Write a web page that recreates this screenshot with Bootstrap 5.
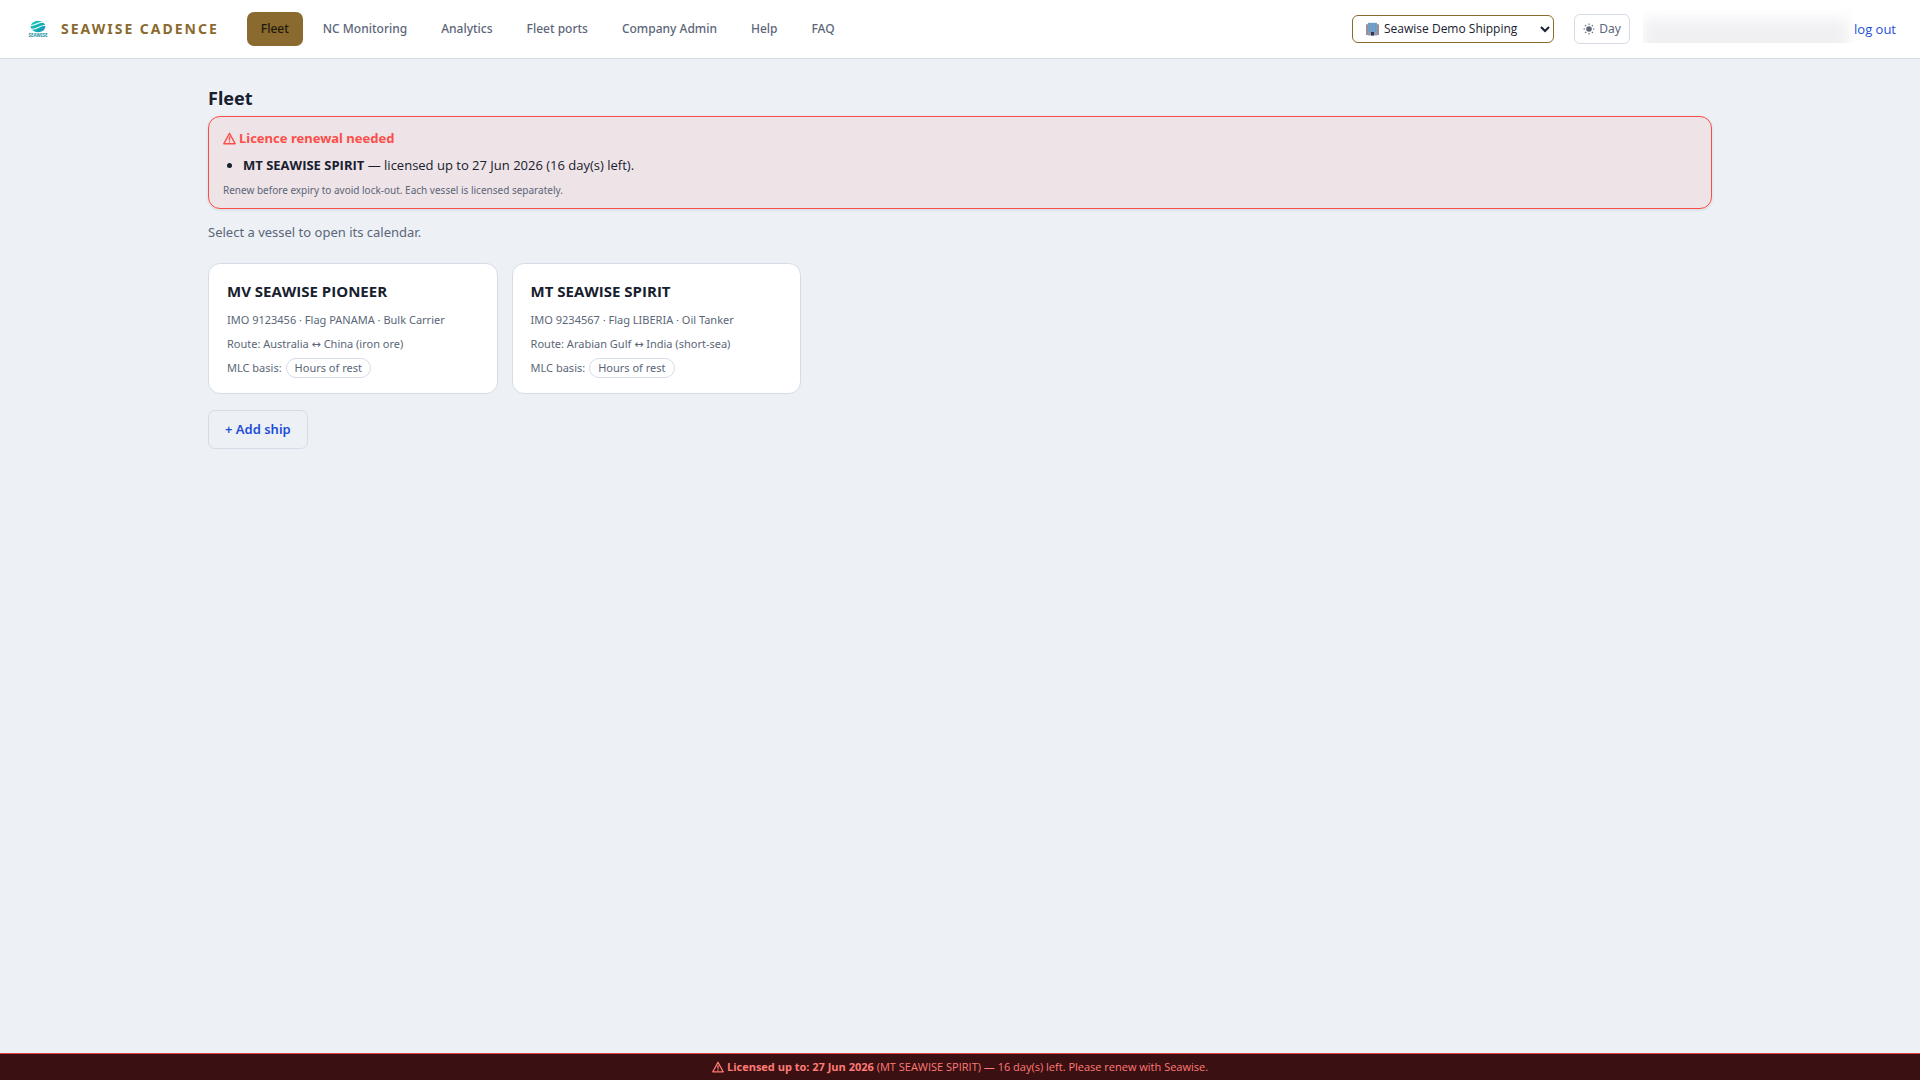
<!DOCTYPE html>
<html lang="en">
<head>
<meta charset="utf-8">
<meta name="viewport" content="width=device-width, initial-scale=1">
<title>Seawise Cadence – Fleet</title>
<link href="https://cdn.jsdelivr.net/npm/bootstrap@5.3.0/dist/css/bootstrap.min.css" rel="stylesheet">
<style>
:root { --ink:#17202e; --muted:#5b6678; --line:#d5dce8; --gold:#8a6a2e; --alert-red:#fa4f48; --link:#1d4ed8; }
body { font-family:"Noto Sans","Open Sans",sans-serif; font-size:14px; line-height:20px; color:var(--ink); background:#edf1f6; }
a { color:var(--link); text-decoration:none; }
.topbar { background:#fff; border-bottom:1px solid var(--line); padding:12px 24px; }
.topbar .navbar-brand { font-size:14px; line-height:20px; font-weight:700; letter-spacing:2px; color:var(--gold); gap:9px; margin-right:28px; padding:0; }
.topbar .navbar-nav { gap:6px; }
.topbar .navbar-nav .nav-link { font-size:12px; line-height:18px; font-weight:500; color:var(--muted); padding:8px 14px; border-radius:7px; }
.topbar .navbar-nav .nav-link.active { background:var(--gold); color:#20180a; }
.company-box { width:202px; margin-right:20px; }
.company-box svg { position:absolute; left:14px; top:7px; pointer-events:none; }
.company-box .form-select { height:28px; padding:0 24px 0 31px; font-family:"Open Sans","Noto Sans",sans-serif; font-size:12px; line-height:18px; color:var(--ink); border:1px solid var(--gold); border-radius:6px;
  background-image:url("data:image/svg+xml,%3csvg xmlns='http://www.w3.org/2000/svg' viewBox='0 0 10 8'%3e%3cpath d='M1 2l4 4 4-4' fill='none' stroke='%2317202e' stroke-width='2'/%3e%3c/svg%3e"); background-size:10px 8px; background-position:right 3px center; }
.theme-btn { width:56px; height:30px; padding:0; gap:4px; font-size:12px; line-height:18px; color:var(--muted); background:#fff; border:1px solid var(--line); border-radius:6px; }
.user-name { width:211px; height:34px; margin:-6px 0 0 13px; overflow:hidden; }
.user-name i { display:block; height:40px; margin:10px 6px 0 0; background:#f0f0f3; filter:blur(7px); }
.logout { font-family:"Open Sans","Noto Sans",sans-serif; font-size:13px; line-height:20px; }
.page { max-width:1600px; padding:28px 48px 48px; }
.page h1 { font-size:18px; line-height:22px; font-weight:700; margin:0 0 7px; }
.licence { background:#eee3e7; border:1px solid var(--alert-red); border-radius:12px; padding:11px 14px 9px; margin:0 0 13px; color:var(--ink); box-shadow:0 1px 3px rgba(20,30,60,.12); }
.licence h2 { font-size:13px; line-height:20px; font-weight:700; color:var(--alert-red); margin:0 0 7px; gap:3px; }
.licence ul { font-family:"Open Sans","Noto Sans",sans-serif; font-size:13px; line-height:20px; padding-left:20px; margin:0 0 6px; }
.licence p { font-size:10px; line-height:18px; color:var(--muted); margin:0; }
.hint { font-size:13px; line-height:20px; color:var(--muted); margin:0 0 21px; }
.fleet { --bs-gutter-x:14px; --bs-gutter-y:14px; }
.vessel { border:1px solid var(--line); border-radius:12px; padding:16px 18px 15px; font-size:11px; line-height:20px; color:var(--muted); }
.vessel h3 { font-family:"Open Sans","Noto Sans",sans-serif; font-size:15px; line-height:22px; font-weight:700; color:var(--ink); margin:0 0 8px; }
.vessel p { margin:0 0 4px; }
.vessel p:last-child { margin:0; gap:4px; }
.route-arrow { font-family:"DejaVu Sans",sans-serif; line-height:1; }
.basis { border:1px solid var(--line); border-radius:12px; padding:0 8px; line-height:18px; }
.add-ship { font-size:13px; line-height:21px; font-weight:600; color:var(--link); border:1px solid var(--line); border-radius:7px; padding:8px 16px; margin-top:16px; }
.licence-bar { background:#3a1013; border-top:1px solid #e04340; color:#ff7b74; font-family:"Open Sans","Noto Sans",sans-serif; font-size:11px; line-height:18px; padding:4px; gap:3px; }
</style>
</head>
<body>
<svg class="d-none" aria-hidden="true">
  <symbol id="warn" viewBox="0 0 12 12"><path d="M6 1.2 11.2 10.8H.8Z" fill="none" stroke="currentColor" stroke-width="1.3" stroke-linejoin="round"/><path d="M6 4.2v3.6M6 8.6v1.2" stroke="currentColor" stroke-width="1.3"/></symbol>
</svg>

<header class="navbar navbar-expand-lg topbar">
  <a class="navbar-brand d-flex align-items-center" href="#">
    <svg width="28" height="28" viewBox="0 0 28 28" aria-hidden="true">
      <defs><linearGradient id="sea" x1="0" y1="0" x2="1" y2="1"><stop offset="0" stop-color="#18d3b5"/><stop offset="1" stop-color="#1290b4"/></linearGradient></defs>
      <ellipse cx="14" cy="11.500" rx="7.300" ry="5.800" fill="url(#sea)"/>
      <path d="M6 10.300C11 11.500 13 7 20 7M6 14C12 15.500 14 10.500 22 10.300" fill="none" stroke="#fff" stroke-width="1.100"/>
      <text x="14" y="21.500" text-anchor="middle" font-size="4.500" font-weight="700" letter-spacing="0" fill="#188f9d">SEAWISE</text>
    </svg>
    <span>SEAWISE CADENCE</span>
  </a>
  <ul class="navbar-nav">
    <li class="nav-item"><a class="nav-link active" aria-current="page" href="#">Fleet</a></li>
    <li class="nav-item"><a class="nav-link" href="#">NC Monitoring</a></li>
    <li class="nav-item"><a class="nav-link" href="#">Analytics</a></li>
    <li class="nav-item"><a class="nav-link" href="#">Fleet ports</a></li>
    <li class="nav-item"><a class="nav-link" href="#">Company Admin</a></li>
    <li class="nav-item"><a class="nav-link" href="#">Help</a></li>
    <li class="nav-item"><a class="nav-link" href="#">FAQ</a></li>
  </ul>
  <div class="d-flex align-items-center ms-auto">
    <div class="company-box position-relative">
      <select class="form-select" aria-label="Company"><option>Seawise Demo Shipping</option></select>
      <svg width="13" height="14" viewBox="0 0 13 14" aria-hidden="true">
        <path d="M0 2.500 2 2V13H0ZM11 2 13 2.500V13H11Z" fill="#9c8f99"/><path d="M2 .8H11V13.500H2Z" fill="#8d9bb5"/>
        <path d="M3.500 1V10M6.500 1V10M9.500 1V10" stroke="#4aa3dd" stroke-width="1.400"/><path d="M2 4H11M2 7H11" stroke="#8d9bb5" stroke-width=".6"/><path d="M5 10H8V13.500H5Z" fill="#3b3346"/>
      </svg>
    </div>
    <button type="button" class="btn theme-btn d-flex align-items-center justify-content-center">
      <svg width="12" height="12" viewBox="0 0 12 12" aria-hidden="true"><circle cx="6" cy="6" r="2.800" fill="currentColor"/><path d="M6 .5V2M6 10V11.500M.5 6H2M10 6H11.500M2.100 2.100 3.200 3.200M8.800 8.800 9.900 9.900M2.100 9.900 3.200 8.800M8.800 3.200 9.900 2.100" stroke="currentColor" stroke-width="1.100"/></svg>
      <span>Day</span>
    </button>
    <div class="user-name" aria-hidden="true"><i></i></div>
    <a class="logout" href="#">log out</a>
  </div>
</header>

<main class="container-fluid page">
  <h1>Fleet</h1>
  <section class="alert licence">
    <h2 class="d-flex align-items-center"><svg width="13" height="13" aria-hidden="true"><use href="#warn"/></svg><span>Licence renewal needed</span></h2>
    <ul><li><strong>MT SEAWISE SPIRIT</strong> — licensed up to 27 Jun 2026 (16 day(s) left).</li></ul>
    <p>Renew before expiry to avoid lock-out. Each vessel is licensed separately.</p>
  </section>
  <p class="hint">Select a vessel to open its calendar.</p>
  <div class="row row-cols-1 row-cols-md-3 row-cols-xl-5 fleet">
    <div class="col">
      <article class="card vessel">
        <h3>MV SEAWISE PIONEER</h3>
        <p>IMO 9123456 · Flag PANAMA · Bulk Carrier</p>
        <p>Route: Australia <span class="route-arrow">↔</span> China (iron ore)</p>
        <p class="d-flex align-items-center">MLC basis: <span class="basis">Hours of rest</span></p>
      </article>
    </div>
    <div class="col">
      <article class="card vessel">
        <h3>MT SEAWISE SPIRIT</h3>
        <p>IMO 9234567 · Flag LIBERIA · Oil Tanker</p>
        <p>Route: Arabian Gulf <span class="route-arrow">↔</span> India (short-sea)</p>
        <p class="d-flex align-items-center">MLC basis: <span class="basis">Hours of rest</span></p>
      </article>
    </div>
  </div>
  <button type="button" class="btn add-ship">+ Add ship</button>
</main>

<footer class="fixed-bottom licence-bar d-flex align-items-center justify-content-center">
  <svg width="12" height="12" aria-hidden="true"><use href="#warn"/></svg>
  <span><strong>Licensed up to: 27 Jun 2026</strong> (MT SEAWISE SPIRIT) — 16 day(s) left. Please renew with Seawise.</span>
</footer>
<script src="https://cdn.jsdelivr.net/npm/bootstrap@5.3.0/dist/js/bootstrap.bundle.min.js"></script>
</body>
</html>
